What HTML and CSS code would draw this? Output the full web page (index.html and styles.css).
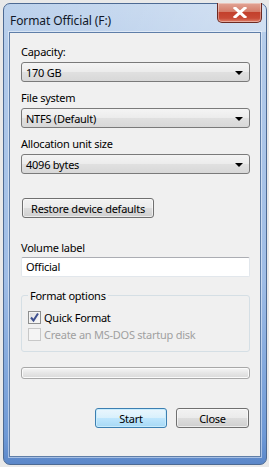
FILE: index.html
```html
<!DOCTYPE html>
<html>
<head>
<meta charset="utf-8">
<link rel="stylesheet" href="styles.css">
</head>
<body>
<div class="window">
  <div class="titlebar">
    <span class="title">Format Official (F:)</span>
    <div class="close-btn">
      <svg width="14" height="11" viewBox="0 0 14 11"><path d="M2 1 L12 10 M12 1 L2 10" stroke="#fff" stroke-width="3" stroke-linecap="square"/></svg>
    </div>
  </div>
  <div class="client">
    <div class="label first">Capacity:</div>
    <div class="combo"><span>170 GB</span><span class="arrow"></span></div>
    <div class="label">File system</div>
    <div class="combo"><span>NTFS (Default)</span><span class="arrow"></span></div>
    <div class="label">Allocation unit size</div>
    <div class="combo"><span>4096 bytes</span><span class="arrow"></span></div>
    <div class="btn restore">Restore device defaults</div>
    <div class="label vol">Volume label</div>
    <div class="textbox">Official</div>
    <div class="group">
      <div class="legend">Format options</div>
      <div class="check-row">
        <span class="checkbox checked">
          <svg width="11" height="11" viewBox="0 0 11 11"><path d="M2 5.5 L4.5 8.5 L9 1.5" fill="none" stroke="#3d4f8e" stroke-width="2"/></svg>
        </span>
        <span>Quick Format</span>
      </div>
      <div class="check-row disabled">
        <span class="checkbox"></span>
        <span>Create an MS-DOS startup disk</span>
      </div>
    </div>
    <div class="progress"></div>
    <div class="buttons">
      <div class="btn start">Start</div>
      <div class="btn close">Close</div>
    </div>
  </div>
</div>
</body>
</html>
```
FILE: styles.css
```css
html, body {
  margin: 0;
  padding: 0;
}
body {
  background: #e9e9e9;
  width: 269px;
  height: 467px;
  padding: 3px 0 0 3px;
  box-sizing: border-box;
  font-family: "Noto Sans", "Open Sans", sans-serif;
  font-size: 11px;
  letter-spacing: -0.25px;
  color: #000;
}
.window {
  width: 264px;
  height: 462px;
  box-sizing: border-box;
  border: 1px solid #4d6a93;
  border-radius: 7px;
  background: linear-gradient(180deg, #bdd2ec 0%, #b3cbea 10%, #9fbde6 60%, #6e99d6 94%, #5b87c9 100%);
  padding: 0 5px 0 5px;
  display: flex;
  flex-direction: column;
}
.titlebar {
  height: 28px;
  display: flex;
  align-items: flex-start;
  justify-content: space-between;
  background: linear-gradient(90deg, rgba(255,255,255,0) 0%, rgba(255,255,255,0.35) 100%);
  margin: 0 -5px;
  padding: 0 4px 0 6px;
  border-radius: 6px 6px 0 0;
}
.title {
  font-size: 12px;
  letter-spacing: -0.1px;
  line-height: 14px;
  margin-top: 10px;
  color: #101828;
}
.close-btn {
  width: 45px;
  height: 20px;
  margin-top: -1px;
  box-sizing: border-box;
  border: 1px solid #6d2a22;
  border-top: none;
  border-radius: 0 0 5px 5px;
  background: linear-gradient(180deg, #e2a596 0%, #d57d6a 45%, #c3402c 50%, #c84a36 80%, #e0816b 100%);
  display: flex;
  align-items: center;
  justify-content: center;
  box-shadow: inset 0 0 0 1px rgba(255,255,255,0.35);
}
.client {
  height: 425px;
  box-sizing: border-box;
  background: #f0f0f0;
  border: 1px solid #5f7ea8;
  box-shadow: 0 0 0 1px rgba(255,255,255,0.45);
  padding: 0 10px 0 11px;
  display: flex;
  flex-direction: column;
}
.label {
  line-height: 15px;
  margin-top: 8px;
}
.label.first {
  margin-top: 11px;
}
.combo {
  height: 20px;
  margin-top: 3px;
  box-sizing: border-box;
  border: 1px solid #7a7a7a;
  border-radius: 3px;
  background: linear-gradient(180deg, #f4f4f4 0%, #ececec 48%, #e0e0e0 52%, #d8d8d8 100%);
  display: flex;
  align-items: center;
  justify-content: space-between;
  padding: 0 6px 0 4px;
  line-height: 15px;
}
.arrow {
  width: 0;
  height: 0;
  border-left: 4px solid transparent;
  border-right: 4px solid transparent;
  border-top: 4px solid #000;
  margin-top: 1px;
}
.btn {
  height: 20px;
  box-sizing: border-box;
  border: 1px solid #707070;
  border-radius: 3px;
  background: linear-gradient(180deg, #f2f2f2 0%, #ebebeb 48%, #dddddd 52%, #cfcfcf 100%);
  display: flex;
  align-items: center;
  justify-content: center;
  line-height: 15px;
  box-shadow: inset 0 0 0 1px rgba(255,255,255,0.6);
}
.restore {
  width: 132px;
  margin-top: 24px;
  margin-left: 1px;
}
.label.vol {
  margin-top: 22px;
}
.textbox {
  height: 20px;
  margin-top: 2px;
  box-sizing: border-box;
  background: #fff;
  border: 1px solid #e2e7ec;
  border-top-color: #abadb3;
  border-radius: 2px;
  padding: 0 4px;
  line-height: 18px;
}
.group {
  margin-top: 18px;
  height: 57px;
  box-sizing: border-box;
  border: 1px solid #d5dfe5;
  border-radius: 3px;
  padding: 0 6px;
  position: relative;
}
.legend {
  position: absolute;
  top: -8px;
  left: 6px;
  padding: 0 2px;
  background: #f0f0f0;
  line-height: 15px;
}
.check-row {
  display: flex;
  align-items: center;
  gap: 3px;
  height: 15px;
  line-height: 15px;
}
.legend + .check-row {
  margin-top: 14px;
}
.check-row + .check-row {
  margin-top: 2px;
}
.checkbox {
  width: 13px;
  height: 13px;
  box-sizing: border-box;
  border: 1px solid #8e8f8f;
  background: linear-gradient(135deg, #dcdcdc 0%, #fbfbfb 100%);
  box-shadow: inset 0 0 0 1px #f4f4f4;
  display: flex;
  align-items: center;
  justify-content: center;
}
.disabled {
  color: #a0a0a0;
}
.disabled .checkbox {
  border-color: #c8c8c8;
  background: #f4f4f4;
}
.progress {
  margin-top: 15px;
  height: 12px;
  box-sizing: border-box;
  border: 1px solid #a8a8a8;
  border-radius: 3px;
  background: linear-gradient(180deg, #f6f6f6 0%, #e6e6e6 50%, #dadada 100%);
  box-shadow: inset 0 0 0 1px #fafafa;
}
.buttons {
  display: flex;
  justify-content: flex-end;
  gap: 9px;
  margin-top: 29px;
  padding-right: 1px;
}
.start {
  width: 72px;
  border-color: #3c7fb1;
  background: linear-gradient(180deg, #eaf6fd 0%, #d9f0fc 48%, #bee6fd 52%, #a7d9f5 100%);
  box-shadow: inset 0 0 0 1px #c8ecfd;
}
.close {
  width: 73px;
}
```
